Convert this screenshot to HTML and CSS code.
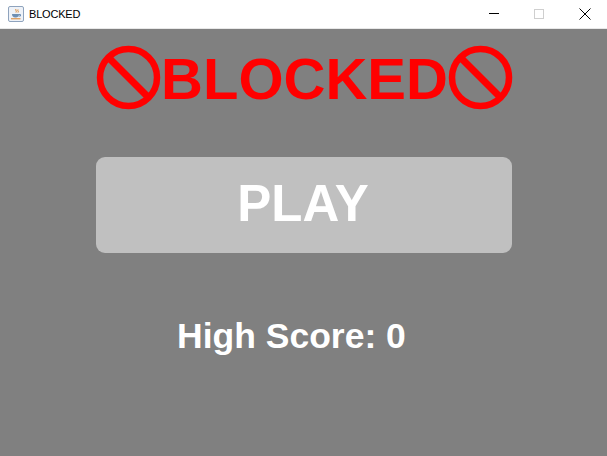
FILE: index.html
```html
<!DOCTYPE html>
<html lang="en">
<head>
    <meta charset="UTF-8">
    <title>BLOCKED</title>
    <link rel="stylesheet" href="styles.css">
</head>
<body>
    <div class="titlebar">
        <svg class="app-icon" width="16" height="16" viewBox="0 0 16 16">
            <rect x="0.5" y="0.5" width="15" height="15" rx="1.5" fill="#eef2f8" stroke="#8fa3bd"/>
            <path d="M8 3c-1 1 1 2 0 3.500M10 3.500c-1 1 1 1.500 0 3" fill="none" stroke="#d9822b" stroke-width="1"/>
            <path d="M4 8h7c0 2-1 3.500-3.500 3.500S4 10 4 8z" fill="#6d8fb3"/>
            <path d="M11 8.500h1.500v1.500H10.500" fill="none" stroke="#6d8fb3"/>
            <path d="M3 12.800h9.500" stroke="#d9822b" stroke-width="1"/>
        </svg>
        <span class="app-name">BLOCKED</span>
        <div class="window-buttons">
            <span class="win-btn">
                <svg width="12" height="12" viewBox="0 0 12 12"><path d="M1 5.500h10" stroke="#000" stroke-width="1"/></svg>
            </span>
            <span class="win-btn win-btn-max">
                <svg width="12" height="12" viewBox="0 0 12 12"><rect x="1.500" y="1.500" width="9" height="9" fill="none" stroke="#cfcfcf"/></svg>
            </span>
            <span class="win-btn">
                <svg width="12" height="12" viewBox="0 0 12 12"><path d="M0.500 0.500l11 11M11.500 0.500l-11 11" stroke="#000" stroke-width="1"/></svg>
            </span>
        </div>
    </div>

    <main class="game">
        <div class="logo">
            <svg class="no-sign" width="65" height="66" viewBox="0 0 65 66">
                <circle cx="32.500" cy="32.500" r="28.500" fill="none" stroke="#f00" stroke-width="6.500"/>
                <path d="M12.500 12.500l40 40" stroke="#f00" stroke-width="7"/>
            </svg>
            <h1>BLOCKED</h1>
            <svg class="no-sign" width="65" height="66" viewBox="0 0 65 66">
                <circle cx="32.500" cy="32.500" r="28.500" fill="none" stroke="#f00" stroke-width="6.500"/>
                <path d="M12.500 12.500l40 40" stroke="#f00" stroke-width="7"/>
            </svg>
        </div>
        <button class="play-btn">PLAY</button>
        <p class="high-score">High Score: 0</p>
    </main>
</body>
</html>
```

FILE: styles.css
```css
* {
    margin: 0;
    padding: 0;
    box-sizing: border-box;
}

body {
    font-family: 'Liberation Sans', Arial, sans-serif;
    width: 607px;
    height: 456px;
    overflow: hidden;
    background-color: #808080;
}

.titlebar {
    display: flex;
    align-items: center;
    height: 29px;
    padding-left: 8px;
    background-color: #ffffff;
    border-bottom: 1px solid #e8e8e8;
}

.app-icon {
    margin-right: 5px;
}

.app-name {
    font-size: 11px;
    letter-spacing: -0.2px;
    color: #000;
}

.window-buttons {
    display: flex;
    margin-left: auto;
}

.win-btn {
    display: flex;
    align-items: center;
    justify-content: center;
    width: 45px;
    height: 28px;
}

.win-btn-max {
    width: 46px;
}

.game {
    display: flex;
    flex-direction: column;
    padding: 16px 0 0 96px;
}

.logo {
    display: flex;
    align-items: center;
    width: 417px;
    height: 66px;
}

.logo h1 {
    flex: 1;
    margin-top: 2px;
    font-size: 58px;
    font-weight: bold;
    line-height: 62px;
    text-align: center;
    color: #ff0000;
    white-space: nowrap;
}

.no-sign {
    flex-shrink: 0;
}

.play-btn {
    width: 416px;
    height: 96px;
    margin-top: 46px;
    padding-bottom: 4px;
    padding-right: 2px;
    border: none;
    border-radius: 9px;
    background-color: #c0c0c0;
    color: #ffffff;
    font-family: inherit;
    font-size: 51px;
    font-weight: bold;
}

.high-score {
    margin-top: 63px;
    margin-left: 81px;
    font-size: 35.500px;
    font-weight: bold;
    color: #ffffff;
}
```
